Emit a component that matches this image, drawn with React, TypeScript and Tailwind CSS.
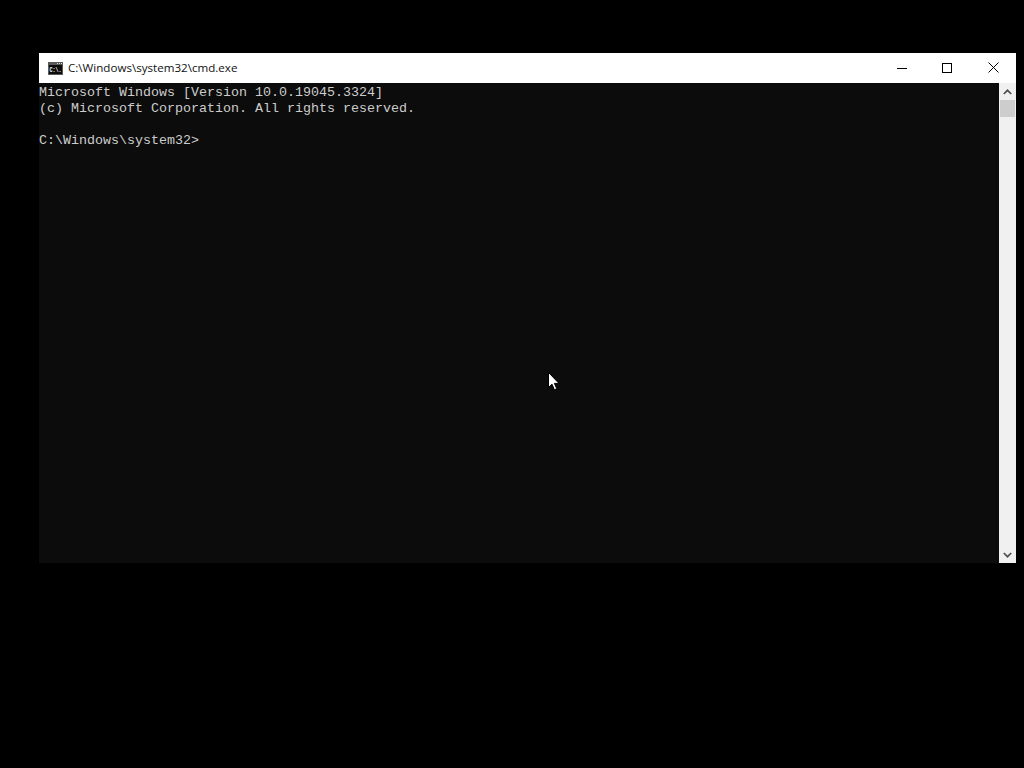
import React from "react";

const CmdIcon = () => (
  <svg width="15" height="13" viewBox="0 0 15 13" className="block">
    <rect x="0" y="0" width="15" height="13" fill="#5a5a5a" />
    <rect x="1" y="3" width="13" height="9" fill="#0c0c0c" />
    <rect x="9" y="1" width="1" height="1" fill="#d8d8d8" />
    <rect x="11" y="1" width="1" height="1" fill="#d8d8d8" />
    <rect x="13" y="1" width="1" height="1" fill="#d8d8d8" />
    <text transform="translate(1.5 10) scale(1 1.4)" fontSize="5" fontWeight="700" fill="#ffffff" fontFamily="'Liberation Mono', monospace">
      C:\.
    </text>
  </svg>
);

const App = () => {
  return (
    <div className="w-[1024px] h-[768px] bg-black pt-[53px] pl-[39px] overflow-hidden relative">
      <div className="w-[977px] h-[510px] flex flex-col">
        {/* title bar */}
        <div className="h-[30px] bg-white flex items-center text-black">
          <div className="ml-[9px] mt-[1px]">
            <CmdIcon />
          </div>
          <span className="ml-[5px] text-[11.6px] font-['Open_Sans',sans-serif] text-[#111]">
            C:\Windows\system32\cmd.exe
          </span>
          <div className="ml-auto flex items-center h-full pb-[1px]">
            <button className="w-[46px] h-full flex items-center justify-center">
              <svg width="10" height="10" viewBox="0 0 10 10">
                <path d="M0 5.5H10" stroke="#000" strokeWidth="1" />
              </svg>
            </button>
            <button className="w-[44px] h-full flex items-center justify-center">
              <svg width="10" height="10" viewBox="0 0 10 10">
                <rect x="0.5" y="0.5" width="9" height="9" fill="none" stroke="#000" strokeWidth="1" />
              </svg>
            </button>
            <button className="w-[46px] ml-[1px] h-full flex items-center justify-center">
              <svg width="11" height="11" viewBox="0 0 11 11">
                <path d="M0.5 0.5L10.5 10.5M10.5 0.5L0.5 10.5" stroke="#000" strokeWidth="1" />
              </svg>
            </button>
          </div>
        </div>

        <div className="flex-1 flex min-h-0">
          {/* console */}
          <div className="flex-1 bg-[#0c0c0c] pt-[2px] text-[#cccccc] font-['Liberation_Mono',monospace] text-[13.33px] leading-[16px] whitespace-pre">
            <div>Microsoft Windows [Version 10.0.19045.3324]</div>
            <div>(c) Microsoft Corporation. All rights reserved.</div>
            <div>&nbsp;</div>
            <div>C:\Windows\system32&gt;</div>
          </div>

          {/* scrollbar */}
          <div className="w-[17px] bg-[#f0f0f0] flex flex-col">
            <div className="h-[17px] flex items-center justify-center">
              <svg width="9" height="6" viewBox="0 0 9 6">
                <path d="M0.8 5L4.5 1.3L8.2 5" fill="none" stroke="#505050" strokeWidth="1.7" />
              </svg>
            </div>
            <div className="h-[17px] mx-[1px] bg-[#cdcdcd]" />
            <div className="flex-1" />
            <div className="h-[17px] flex items-center justify-center">
              <svg width="9" height="6" viewBox="0 0 9 6">
                <path d="M0.8 1L4.5 4.7L8.2 1" fill="none" stroke="#505050" strokeWidth="1.7" />
              </svg>
            </div>
          </div>
        </div>
      </div>

      {/* mouse cursor */}
      <svg width="12" height="19" viewBox="0 0 12 19" className="absolute left-[548px] top-[372px]">
        <path d="M0.5 0.5V15.5L4 12.2L6.4 17.8L8.8 16.8L6.4 11.4H11Z" fill="#fff" stroke="#000" strokeWidth="1" />
      </svg>
    </div>
  );
};

export default App;
